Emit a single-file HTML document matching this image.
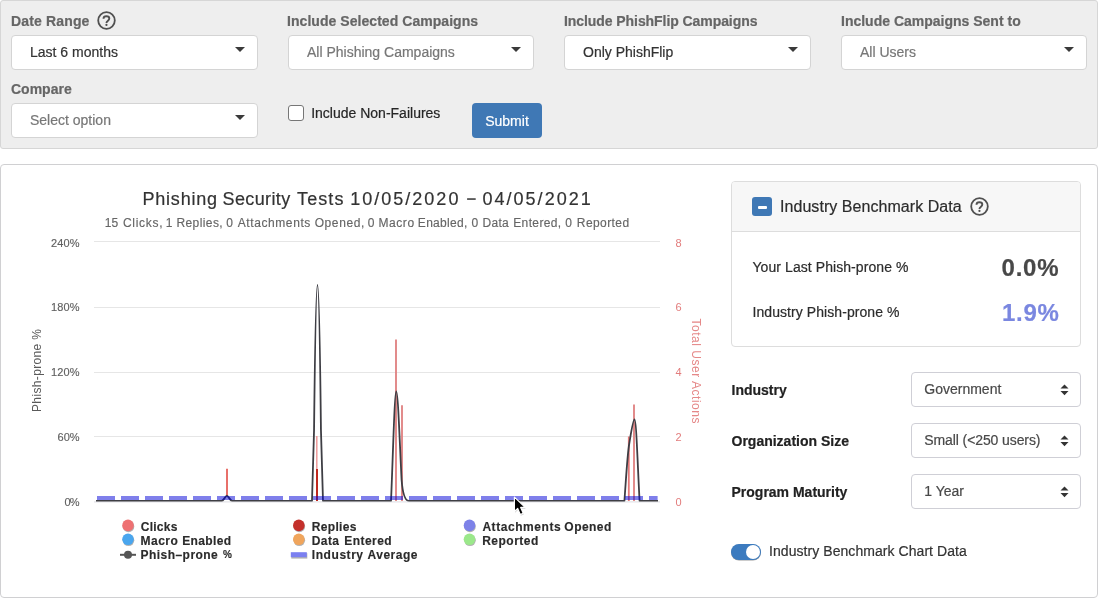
<!DOCTYPE html>
<html>
<head>
<meta charset="utf-8">
<title>Phishing Security Tests</title>
<style>
*{box-sizing:border-box;margin:0;padding:0}
html,body{width:1118px;height:601px;overflow:hidden;background:#fff}
body{-webkit-text-stroke:0.2px currentColor;font-family:"Liberation Sans",sans-serif;font-size:14px;color:#333;position:relative}
.abs{position:absolute}
.filters{position:absolute;left:0;top:0;width:1098px;height:149px;background:#eeeeee;border:1px solid #d6d6d6;border-radius:3px}
.lbl{margin-top:0.4px;position:absolute;font-weight:bold;font-size:14px;line-height:20px;color:#666;white-space:nowrap}
.sel{position:absolute;height:35px;background:#fff;border:1px solid #d4d4d4;border-radius:4px;font-size:14px;line-height:33px;padding-left:18px;color:#777;white-space:nowrap}
.sel.dark{color:#333}
.sel i{position:absolute;right:12px;top:10.5px;width:0;height:0;border-left:5px solid transparent;border-right:5px solid transparent;border-top:5.5px solid #3a3a3a}
.card{position:absolute;left:0;top:164px;width:1098px;height:434px;background:#fff;border:1px solid #d0d0d2;border-radius:4px}
.bench{position:absolute;left:731px;top:181px;width:350px;height:166px;border:1px solid #dddddd;border-radius:4px;background:#fff}
.bench .hd{position:absolute;left:0;top:0;width:348px;height:50px;background:#f7f7f7;border-bottom:1px solid #dddddd;border-radius:3px 3px 0 0}
.t{position:absolute;white-space:nowrap;line-height:20px}
.sel2{position:absolute;left:911px;width:170px;height:35px;border:1px solid #cfcfd6;border-radius:4px;background:#fff;font-size:14px;line-height:33px;padding-left:12.3px;color:#494949;white-space:nowrap}
.sel2 svg{position:absolute;left:147.5px;top:11px}
</style>
</head>
<body>
<div id="root" style="position:absolute;left:0;top:0;width:1118px;height:601px;will-change:transform">

<!-- FILTER BAR -->
<div class="filters"></div>

<div class="lbl" style="left:11px;top:11px;letter-spacing:0.15px">Date Range</div>
<svg class="abs" style="left:96px;top:10px" width="21" height="21" viewBox="0 0 21 21">
  <circle cx="10.5" cy="10.5" r="8.3" fill="none" stroke="#505050" stroke-width="1.8"/>
  <path d="M7.5 8.7 C7.5 7.1 8.7 6.3 10.4 6.3 C12.1 6.3 13.3 7.2 13.3 8.6 C13.3 10.7 10.45 10.6 10.45 13.1" fill="none" stroke="#505050" stroke-width="1.9"/><circle cx="10.45" cy="14.9" r="1.1" fill="#505050"/>
</svg>
<div class="lbl" style="left:287px;top:11px;letter-spacing:0.05px">Include Selected Campaigns</div>
<div class="lbl" style="left:564px;top:11px;letter-spacing:-0.07px">Include PhishFlip Campaigns</div>
<div class="lbl" style="left:841px;top:11px">Include Campaigns Sent to</div>

<div class="sel dark" style="left:11px;top:35px;width:247px">Last 6 months<i></i></div>
<div class="sel" style="left:288px;top:35px;width:246px">All Phishing Campaigns<i></i></div>
<div class="sel dark" style="left:564px;top:35px;width:247px">Only PhishFlip<i></i></div>
<div class="sel" style="left:841px;top:35px;width:246px">All Users<i></i></div>

<div class="lbl" style="left:11px;top:79px">Compare</div>
<div class="sel" style="left:11px;top:103px;width:247px">Select option<i></i></div>

<div class="abs" style="left:288px;top:105px;width:16px;height:16px;background:#fff;border:1px solid #767676;border-radius:3px"></div>
<div class="t" style="left:311.2px;top:103.4px;font-size:14px;color:#262626">Include Non-Failures</div>
<div class="abs" style="left:472px;top:103px;width:70px;height:35px;background:#3f78b5;border-radius:4px;color:#fff;font-size:14px;line-height:36px;text-align:center">Submit</div>

<!-- CHART CARD -->
<div class="card"></div>

<svg class="abs" style="left:0;top:0" width="730" height="601" viewBox="0 0 730 601" font-family="Liberation Sans, sans-serif">
  <!-- title / subtitle -->
  <g font-size="18" fill="#333" stroke="#333" stroke-width="0.2">
    <text x="142.49" y="205" textLength="74.54" lengthAdjust="spacing">Phishing</text>
    <text x="222.53" y="205" textLength="67.70" lengthAdjust="spacing">Security</text>
    <text x="297.05" y="205" textLength="46.35" lengthAdjust="spacing">Tests</text>
    <text x="350.28" y="205" textLength="108.12" lengthAdjust="spacing">10/05/2020</text>
  </g>
  <rect x="467.1" y="198.3" width="8.6" height="1.5" fill="#333"/>
  <g font-size="18" fill="#333" stroke="#333" stroke-width="0.2">
    <text x="482.48" y="205" textLength="108.26" lengthAdjust="spacing">04/05/2021</text>
  </g>
  <g font-size="12" fill="#666" stroke="#666" stroke-width="0.15">
    <text x="104.85" y="226.8" textLength="13.36" lengthAdjust="spacing">15</text>
    <text x="122.94" y="226.8" textLength="39.55" lengthAdjust="spacing">Clicks,</text>
    <text x="165.75" y="226.8">1</text>
    <text x="176.41" y="226.8" textLength="46.29" lengthAdjust="spacing">Replies,</text>
    <text x="226.27" y="226.8">0</text>
    <text x="237.67" y="226.8" textLength="72.68" lengthAdjust="spacing">Attachments</text>
    <text x="314.67" y="226.8" textLength="49.60" lengthAdjust="spacing">Opened,</text>
    <text x="367.87" y="226.8">0</text>
    <text x="378.41" y="226.8" textLength="35.69" lengthAdjust="spacing">Macro</text>
    <text x="417.81" y="226.8" textLength="49.61" lengthAdjust="spacing">Enabled,</text>
    <text x="471.57" y="226.8">0</text>
    <text x="482.61" y="226.8" textLength="26.04" lengthAdjust="spacing">Data</text>
    <text x="513.21" y="226.8" textLength="47.99" lengthAdjust="spacing">Entered,</text>
    <text x="565.37" y="226.8">0</text>
    <text x="576.81" y="226.8" textLength="52.33" lengthAdjust="spacing">Reported</text>
  </g>

  <!-- grid lines -->
  <g stroke="#e6e6e6" stroke-width="1" shape-rendering="crispEdges">
    <line x1="94" x2="660" y1="241.5" y2="241.5"/>
    <line x1="94" x2="660" y1="307.5" y2="307.5"/>
    <line x1="94" x2="660" y1="372.5" y2="372.5"/>
    <line x1="94" x2="660" y1="436.5" y2="436.5"/>
  </g>

  <!-- left axis labels -->
  <g font-size="11" fill="#606060" stroke="#606060" stroke-width="0.15" text-anchor="end">
    <text x="79.6" y="246.8" textLength="28.6" lengthAdjust="spacing">240%</text>
    <text x="79.6" y="311" textLength="28.6" lengthAdjust="spacing">180%</text>
    <text x="79.6" y="375.9" textLength="28.6" lengthAdjust="spacing">120%</text>
    <text x="79.6" y="440.7" textLength="22" lengthAdjust="spacing">60%</text>
    <text x="79.6" y="505.9" textLength="15" lengthAdjust="spacing">0%</text>
  </g>
  <!-- right axis labels -->
  <g font-size="11" fill="#e27c7c">
    <text x="675.4" y="246.8">8</text>
    <text x="675.4" y="311">6</text>
    <text x="675.4" y="375.9">4</text>
    <text x="675.4" y="440.7">2</text>
    <text x="675.4" y="505.9">0</text>
  </g>
  <!-- axis titles -->
  <text transform="translate(41,412) rotate(-90)" font-size="12" fill="#5a5a5a" textLength="83" lengthAdjust="spacing">Phish-prone %</text>
  <text transform="translate(692,318.5) rotate(90)" font-size="12" fill="#e58888" textLength="105" lengthAdjust="spacing">Total User Actions</text>

  <!-- columns (clicks / replies) -->
  <defs><clipPath id="plotclip"><rect x="94" y="236" width="566" height="265.4"/></clipPath></defs>
  <line x1="94" x2="660" y1="501.9" y2="501.9" stroke="#dcdce2" stroke-width="1"/>
  <g fill="none" clip-path="url(#plotclip)">
    <line x1="227" x2="227" y1="468.7" y2="497" stroke="#e8706a" stroke-width="2"/>
    <line x1="316.8" x2="316.8" y1="436" y2="469" stroke="#ee9a9a" stroke-width="1.5"/>
    <line x1="317" x2="317" y1="469" y2="501" stroke="#c0281f" stroke-width="2"/>
    <line x1="396" x2="396" y1="339.5" y2="501" stroke="#df7f7f" stroke-width="1.8"/>
    <line x1="402" x2="402" y1="405.2" y2="501" stroke="#df7f7f" stroke-width="1.8"/>
    <line x1="628.8" x2="628.8" y1="436.5" y2="501" stroke="#e57878" stroke-width="1.8"/>
    <line x1="634" x2="634" y1="404.5" y2="501" stroke="#df7f7f" stroke-width="1.8"/>
  </g>

  <!-- phish-prone % spline -->
  <path clip-path="url(#plotclip)" fill="none" stroke="#3e3e44" stroke-width="1.8" stroke-linejoin="round" d="
    M96,501 L221.5,501 C223.5,501 225.6,495.6 226.9,495.6 C228.2,495.6 230.3,501 232.3,501
    L312,501 C312.9,475 313.6,450 314.05,430 C314.6,382 315.6,285 317.5,285 C319.4,285 320.4,382 320.95,430 C321.4,450 322.1,475 323,501
    L391,501 C392.5,470 394.5,391.5 396.2,391.5 C398,391.5 399.6,440 401.6,480 C402.8,495 405,501 409,501
    L624.4,501 C626,480 627.3,455 629.2,444 C631,433 633,419.5 634.5,419.5 C636.4,419.5 637.8,470 639.6,501
    L658,501"/>

  <!-- industry average dashed line -->
  <line x1="97" x2="657.6" y1="498" y2="498" stroke="rgba(0,0,215,0.5)" stroke-width="4" stroke-dasharray="18 6"/>

  <!-- legend -->
  <g font-size="12" font-weight="bold" fill="#2b2b2b" stroke="#2b2b2b" stroke-width="0.15">
    <text x="140.73" y="530.8" textLength="36.70" lengthAdjust="spacing">Clicks</text>
    <text x="140.53" y="544.7" textLength="37.34" lengthAdjust="spacing">Macro</text>
    <text x="182.23" y="544.7" textLength="48.89" lengthAdjust="spacing">Enabled</text>
    <text x="140.53" y="558.6" textLength="77.25" lengthAdjust="spacing">Phish–prone</text>
    <text x="222.92" y="558.4" font-size="10">%</text>
    <text x="311.83" y="530.8" textLength="44.51" lengthAdjust="spacing">Replies</text>
    <text x="311.83" y="544.7" textLength="27.13" lengthAdjust="spacing">Data</text>
    <text x="344.33" y="544.7" textLength="47.26" lengthAdjust="spacing">Entered</text>
    <text x="311.83" y="558.6" textLength="51.23" lengthAdjust="spacing">Industry</text>
    <text x="367.50" y="558.6" textLength="49.95" lengthAdjust="spacing">Average</text>
    <text x="482.40" y="530.8" textLength="78.24" lengthAdjust="spacing">Attachments</text>
    <text x="564.33" y="530.8" textLength="47.03" lengthAdjust="spacing">Opened</text>
    <text x="482.13" y="544.7" textLength="56.28" lengthAdjust="spacing">Reported</text>
  </g>
  <g>
    <circle cx="128.5" cy="526.4" r="5.8" fill="#000" opacity="0.3"/>
    <circle cx="128" cy="525.4" r="5.8" fill="#ee7172"/>
    <circle cx="128.5" cy="540.3" r="5.8" fill="#000" opacity="0.3"/>
    <circle cx="128" cy="539.3" r="5.8" fill="#4aa6ee"/>
    <line x1="120" x2="136" y1="554.8" y2="554.8" stroke="#555" stroke-width="2"/>
    <circle cx="128" cy="554.8" r="4" fill="#555"/>

    <circle cx="299.3" cy="526.4" r="5.8" fill="#000" opacity="0.3"/>
    <circle cx="298.8" cy="525.4" r="5.8" fill="#c4302b"/>
    <circle cx="299.3" cy="540.3" r="5.8" fill="#000" opacity="0.3"/>
    <circle cx="298.8" cy="539.3" r="5.8" fill="#f0a55c"/>
    <rect x="291.3" y="553.2" width="16" height="5.4" fill="#000" opacity="0.3"/>
    <rect x="290.8" y="552.2" width="16" height="5" fill="#7b80f0"/>

    <circle cx="470" cy="526.4" r="5.8" fill="#000" opacity="0.3"/>
    <circle cx="469.5" cy="525.4" r="5.8" fill="#7d82e8"/>
    <circle cx="470" cy="540.3" r="5.8" fill="#000" opacity="0.3"/>
    <circle cx="469.5" cy="539.3" r="5.8" fill="#9be88a"/>
  </g>
</svg>


<!-- BENCHMARK PANEL -->
<div class="bench"><div class="hd"></div></div>
<div class="abs" style="left:752px;top:197px;width:20px;height:19px;background:#3f78b5;border-radius:3px"></div>
<div class="abs" style="left:758px;top:206px;width:9px;height:2.5px;background:#fff;border-radius:1px"></div>
<div class="t" style="left:780px;top:197.4px;font-size:16px;color:#2c2c2c;letter-spacing:0.05px">Industry Benchmark Data</div>
<svg class="abs" style="left:969px;top:196px;width:21px;height:21px" viewBox="0 0 21 21">
  <circle cx="10.5" cy="10.5" r="8.3" fill="none" stroke="#505050" stroke-width="1.8"/>
  <path d="M7.5 8.7 C7.5 7.1 8.7 6.3 10.4 6.3 C12.1 6.3 13.3 7.2 13.3 8.6 C13.3 10.7 10.45 10.6 10.45 13.1" fill="none" stroke="#505050" stroke-width="1.9"/><circle cx="10.45" cy="14.9" r="1.1" fill="#505050"/>
</svg>

<div class="t" style="left:752.5px;top:256.7px;color:#2c2c2c;letter-spacing:0.07px">Your Last Phish-prone %</div>
<div class="t" style="left:752.5px;top:301.7px;color:#2c2c2c;letter-spacing:0.07px">Industry Phish-prone %</div>
<div class="t" style="left:1001.5px;top:252.7px;font-size:24px;line-height:30px;font-weight:bold;color:#484848;letter-spacing:0.8px">0.0%</div>
<div class="t" style="left:1002px;top:297.6px;font-size:24px;line-height:30px;font-weight:bold;color:#7a87e0;letter-spacing:0.7px">1.9%</div>

<div class="t" style="left:731.5px;top:380.3px;font-weight:bold;color:#222">Industry</div>
<div class="t" style="left:731.5px;top:431.2px;font-weight:bold;color:#222">Organization Size</div>
<div class="t" style="left:731.5px;top:482px;font-weight:bold;color:#222">Program Maturity</div>

<div class="sel2" style="top:372px">Government<svg width="9" height="12" viewBox="0 0 9 12"><path d="M0.5 4.6 L4.5 0.4 L8.5 4.6 Z M0.5 7 L8.5 7 L4.5 11.2 Z" fill="#333"/></svg></div>
<div class="sel2" style="top:423px;letter-spacing:-0.1px">Small (&lt;250 users)<svg width="9" height="12" viewBox="0 0 9 12"><path d="M0.5 4.6 L4.5 0.4 L8.5 4.6 Z M0.5 7 L8.5 7 L4.5 11.2 Z" fill="#333"/></svg></div>
<div class="sel2" style="top:474px">1 Year<svg width="9" height="12" viewBox="0 0 9 12"><path d="M0.5 4.6 L4.5 0.4 L8.5 4.6 Z M0.5 7 L8.5 7 L4.5 11.2 Z" fill="#333"/></svg></div>

<!-- toggle -->
<div class="abs" style="left:731px;top:543.5px;width:30px;height:16px;border-radius:8px;background:#3c7bbf;box-shadow:0 0.6px 0 rgba(0,0,0,0.4)"></div>
<div class="abs" style="left:745.5px;top:544.5px;width:14px;height:14px;border-radius:7px;background:#fff"></div>
<div class="t" style="left:769px;top:541.3px;color:#333;letter-spacing:0.06px">Industry Benchmark Chart Data</div>

<!-- CURSOR -->
<svg class="abs" style="left:510px;top:493px" width="20" height="26" viewBox="0 0 20 26">
  <path d="M4.40 4.10 L4.40 18.51 L7.70 15.43 L10.23 21.48 L13.20 20.27 L10.67 14.44 L15.18 14.44 Z" fill="#000" opacity="0.18" transform="translate(0.6,1.2)"/>
  <path d="M4.40 4.10 L4.40 18.51 L7.70 15.43 L10.23 21.48 L13.20 20.27 L10.67 14.44 L15.18 14.44 Z" fill="#000" stroke="#fff" stroke-width="1.2" stroke-linejoin="round"/>
</svg>

</div>
</body>
</html>
